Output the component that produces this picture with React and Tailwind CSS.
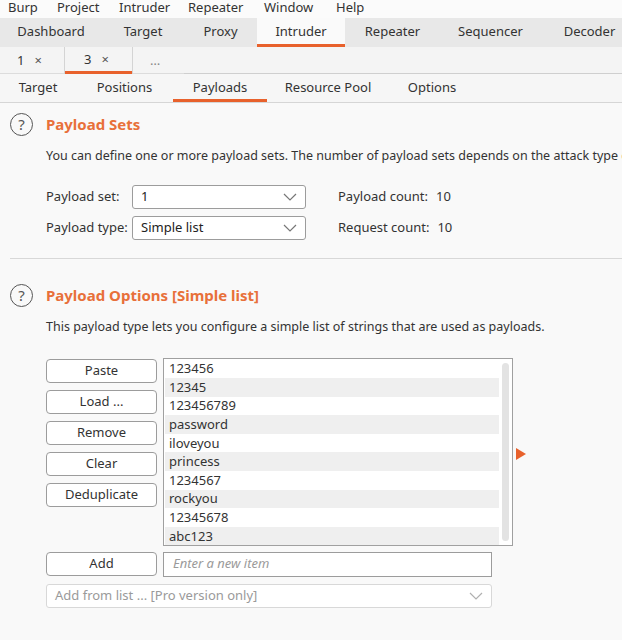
import React from "react";

const mainTabs = [
  { label: "Dashboard", w: "w-[102px]" },
  { label: "Target", w: "w-[82px]" },
  { label: "Proxy", w: "w-[73px]" },
  { label: "Intruder", w: "w-[88px]", active: true },
  { label: "Repeater", w: "w-[95px]" },
  { label: "Sequencer", w: "w-[101px]" },
  { label: "Decoder", w: "w-[97px]" },
];

const subTabs = [
  { label: "Target", w: "w-[76px]" },
  { label: "Positions", w: "w-[97px]" },
  { label: "Payloads", w: "w-[94px]", active: true },
  { label: "Resource Pool", w: "w-[122px]" },
  { label: "Options", w: "w-[86px]" },
];

const payloads = [
  "123456",
  "12345",
  "123456789",
  "password",
  "iloveyou",
  "princess",
  "1234567",
  "rockyou",
  "12345678",
  "abc123",
];

function Chevron({ className }) {
  return (
    <svg width="14" height="8" viewBox="0 0 14 8" className={className}>
      <path d="M1 1 L7 7 L13 1" fill="none" stroke="currentColor" strokeWidth="1.2" />
    </svg>
  );
}

function HelpIcon() {
  return (
    <div className="flex h-[23px] w-[23px] items-center justify-center rounded-full border-[1.5px] border-[#555] text-[15px] leading-none text-[#555]">
      ?
    </div>
  );
}

function Select({ value, className, disabled }) {
  return (
    <div
      className={`flex h-[24px] items-center justify-between rounded-[3px] border bg-white pl-2 pr-2 ${
        disabled ? "border-[#d8d8d8] text-[#9a9a9a]" : "border-[#9c9c9c] text-[#222]"
      } ${className}`}
    >
      <span>{value}</span>
      <Chevron className={disabled ? "text-[#b0b0b0]" : "text-[#777]"} />
    </div>
  );
}

function Button({ children }) {
  return (
    <button className="flex h-[24px] w-[111px] items-center justify-center rounded-[4px] border border-[#9c9c9c] bg-white text-[#333]">
      {children}
    </button>
  );
}

export default function App() {
  return (
    <div
      className="h-[640px] w-[622px] overflow-hidden bg-[#f9f9f9] text-[13px] text-[#333]"
      style={{ fontFamily: '"Noto Sans", "Open Sans", sans-serif' }}
    >
      {/* menu bar */}
      <div className="flex h-[18px] items-start bg-[#fbfbfb] pl-[8px] leading-[15px] text-[#333]">
        <span className="w-[49px]">Burp</span>
        <span className="w-[62px]">Project</span>
        <span className="w-[69px]">Intruder</span>
        <span className="w-[76px]">Repeater</span>
        <span className="w-[72px]">Window</span>
        <span>Help</span>
      </div>

      {/* main tabs */}
      <div className="flex h-[29px] bg-[#e8e8e8]">
        {mainTabs.map((t) => (
          <div
            key={t.label}
            className={`flex shrink-0 items-center justify-center border-b-[3px] pt-[2px] ${t.w} ${
              t.active ? "border-[#e8612c] bg-[#fafafa]" : "border-transparent"
            }`}
          >
            {t.label}
          </div>
        ))}
      </div>

      {/* numbered tabs */}
      <div className="flex h-[27px] bg-[#f4f4f4]">
        <div className="flex w-[64px] items-center border-b border-[#dcdcdc] pl-[17px] pt-[2px]">
          1<span className="ml-[10px] text-[#555]">×</span>
        </div>
        <div className="w-px bg-[#d4d4d4]" />
        <div className="flex w-[67px] items-center border-b-[3px] border-[#e8612c] pl-[19px] pt-[2px]">
          3<span className="ml-[10px] text-[#555]">×</span>
        </div>
        <div className="w-px bg-[#d4d4d4]" />
        <div className="flex w-[51px] items-center border-b border-[#dcdcdc] pl-[17px] pt-[2px] text-[#888]">
          …
        </div>
        <div className="flex-1 border-b border-[#cfcfcf]" />
      </div>

      {/* intruder subtabs */}
      <div className="flex h-[29px] border-b border-[#d6d6d6] bg-[#f6f6f6]">
        {subTabs.map((t) => (
          <div
            key={t.label}
            className={`flex shrink-0 items-center justify-center border-b-[3px] pt-[2px] ${t.w} ${
              t.active ? "border-[#e8612c]" : "border-transparent"
            }`}
          >
            {t.label}
          </div>
        ))}
      </div>

      {/* payload sets */}
      <div className="pl-[10px] pt-[10px]">
        <div className="flex items-center gap-[13px]">
          <HelpIcon />
          <span className="text-[15px] font-bold text-[#e8703a]">Payload Sets</span>
        </div>
        <p className="mt-[11px] whitespace-nowrap pl-[36px] text-[12.5px]">
          You can define one or more payload sets. The number of payload sets depends on the attack type defined in the Positions tab.
        </p>
        <div className="mt-[19px] flex flex-col gap-[7px] pl-[36px]">
          <div className="flex items-center">
            <span className="w-[86px]">Payload set:</span>
            <Select value="1" className="w-[174px]" />
            <span className="ml-[32px]">Payload count:</span>
            <span className="ml-[8px]">10</span>
          </div>
          <div className="flex items-center">
            <span className="w-[86px]">Payload type:</span>
            <Select value="Simple list" className="w-[174px]" />
            <span className="ml-[32px]">Request count:</span>
            <span className="ml-[8px]">10</span>
          </div>
        </div>
        <div className="mt-[18px] h-px bg-[#d8d8d8]" />
      </div>

      {/* payload options */}
      <div className="pl-[10px] pt-[25px]">
        <div className="flex items-center gap-[13px]">
          <HelpIcon />
          <span className="text-[15px] font-bold text-[#e8703a]">Payload Options [Simple list]</span>
        </div>
        <p className="mt-[11px] whitespace-nowrap pl-[36px] text-[12.5px]">
          This payload type lets you configure a simple list of strings that are used as payloads.
        </p>

        <div className="mt-[21px] flex pl-[36px]">
          <div className="flex w-[117px] flex-col gap-[7px] pt-[1px]">
            <Button>Paste</Button>
            <Button>Load ...</Button>
            <Button>Remove</Button>
            <Button>Clear</Button>
            <Button>Deduplicate</Button>
          </div>
          <div className="flex h-[188px] w-[350px] border border-[#a0a0a0] bg-white py-px pl-px">
            <div className="flex-1">
              {payloads.map((p, i) => (
                <div
                  key={p}
                  className={`flex h-[18.6px] items-center pl-[4px] leading-none ${
                    i % 2 ? "bg-[#efefef]" : "bg-white"
                  }`}
                >
                  {p}
                </div>
              ))}
            </div>
            <div className="mx-[3px] my-[3px] w-[7px] rounded-full bg-[#e3e3e3]" />
          </div>
          <div className="ml-[3px] flex items-center pt-[4px]">
            <svg width="10" height="12" viewBox="0 0 10 12">
              <path d="M0 0 L10 6 L0 12 Z" fill="#e8612c" />
            </svg>
          </div>
        </div>

        <div className="mt-[6px] flex pl-[36px]">
          <div className="w-[117px]">
            <Button>Add</Button>
          </div>
          <div className="flex h-[25px] w-[329px] items-center border border-[#9c9c9c] bg-white pl-[9px] italic text-[#9a9a9a]">
            Enter a new item
          </div>
        </div>

        <div className="mt-[7px] pl-[36px]">
          <Select value="Add from list ... [Pro version only]" className="w-[446px]" disabled />
        </div>
      </div>
    </div>
  );
}
